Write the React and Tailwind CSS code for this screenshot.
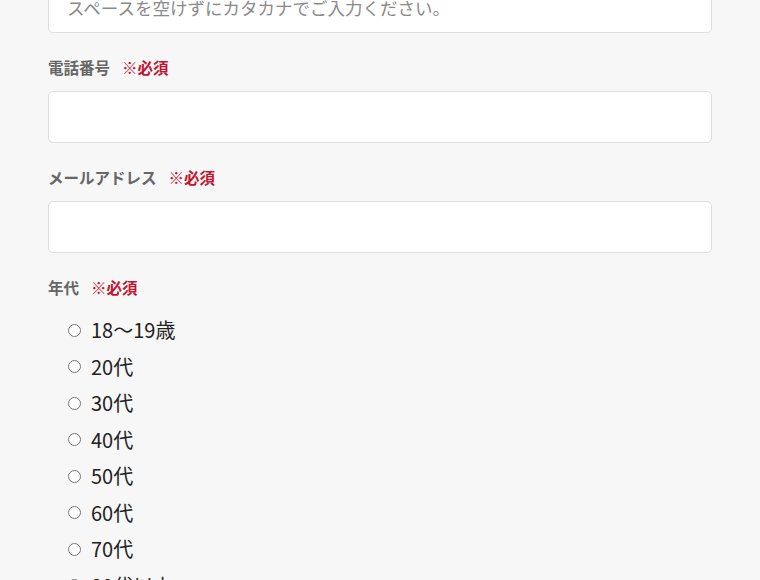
import { useState } from "react";

const jp = { fontFamily: '"Noto Sans CJK JP", "Noto Sans", sans-serif' };

const ages = ["18〜19歳", "20代", "30代", "40代", "50代", "60代", "70代", "80代以上"];

function Label({ children }) {
  return (
    <div className="flex items-center h-[22px] text-[15.5px] font-bold text-[#666] leading-none">
      <span>{children}</span>
      <span className="ml-[12px] text-[#c2132f]">※必須</span>
    </div>
  );
}

function TextInput({ placeholder, type = "text" }) {
  return (
    <input
      type={type}
      placeholder={placeholder}
      className="block w-full h-[52px] rounded-[5px] border border-[#dedede] bg-white px-[18px] text-[17.5px] text-[#333] placeholder:text-[#8a8a8a] outline-none"
      style={jp}
    />
  );
}

export default function App() {
  const [age, setAge] = useState("");

  return (
    <div className="min-h-screen bg-[#f7f7f7] overflow-hidden" style={jp}>
      <div className="w-[664px] ml-[48px] mt-[-19px] flex flex-col">
        <TextInput placeholder="スペースを空けずにカタカナでご入力ください。" />

        <div className="mt-[24px]">
          <Label>電話番号</Label>
        </div>
        <div className="mt-[12px]">
          <TextInput type="tel" />
        </div>

        <div className="mt-[24px]">
          <Label>メールアドレス</Label>
        </div>
        <div className="mt-[12px]">
          <TextInput type="email" />
        </div>

        <div className="mt-[24px]">
          <Label>年代</Label>
        </div>

        <ul className="mt-[13px] pl-5 flex flex-col">
          {ages.map((a) => (
            <li key={a} className="h-[36.5px] flex items-center">
              <label className="flex items-center cursor-pointer">
                <input
                  type="radio"
                  name="age"
                  value={a}
                  checked={age === a}
                  onChange={() => setAge(a)}
                  className="m-0 w-[13px] h-[13px]"
                />
                <span className="ml-[10px] text-[20px] text-[#222] leading-none">{a}</span>
              </label>
            </li>
          ))}
        </ul>
      </div>
    </div>
  );
}
